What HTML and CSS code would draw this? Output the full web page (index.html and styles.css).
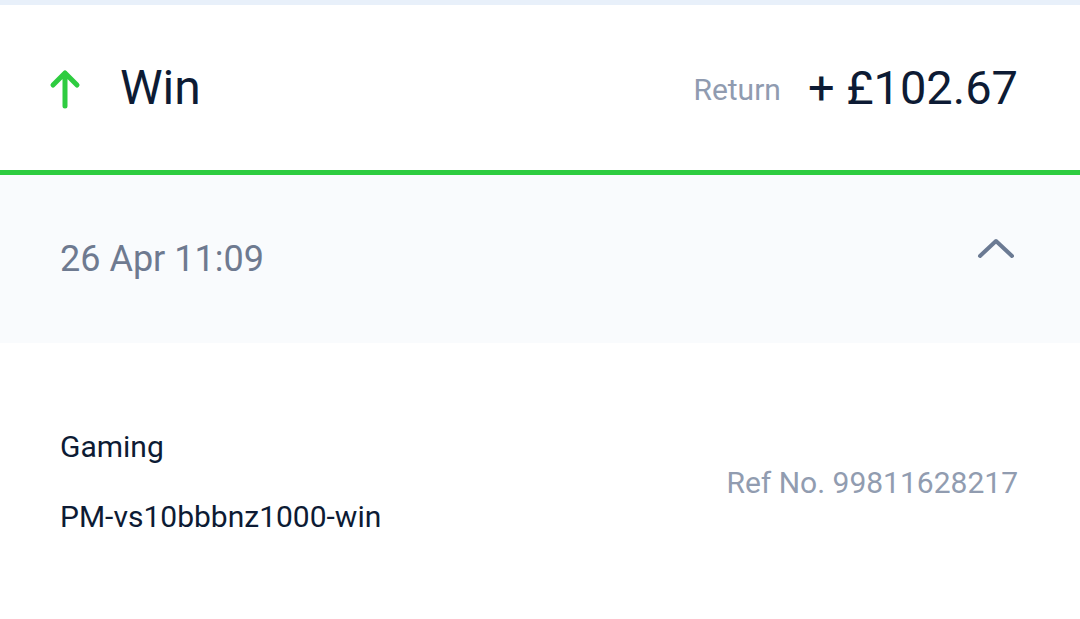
FILE: index.html
```html
<!DOCTYPE html>
<html lang="en">
<head>
  <meta charset="UTF-8">
  <meta name="viewport" content="width=device-width, initial-scale=1.0">
  <title>Transaction</title>
  <link rel="stylesheet" href="styles.css">
</head>
<body>
  <div class="top-strip"></div>

  <!-- En-tête de la transaction -->
  <header class="tx-header">
    <div class="tx-type">
      <svg class="arrow" width="32" height="40" viewBox="0 0 32 40">
        <path d="M16 37 V4 M4 16 L16 4 L28 16" fill="none" stroke="#2ecc40" stroke-width="5" stroke-linecap="round" stroke-linejoin="round"/>
      </svg>
      <span class="tx-title">Win</span>
    </div>
    <div class="tx-amount">
      <span class="label">Return</span>
      <span class="value">+ £102.67</span>
    </div>
  </header>

  <!-- Date et bouton replier -->
  <section class="tx-date">
    <span class="date">26 Apr 11:09</span>
    <svg class="chevron" width="38" height="22" viewBox="0 0 38 22">
      <path d="M3 19 L19 4 L35 19" fill="none" stroke="#6b7a93" stroke-width="4" stroke-linecap="round" stroke-linejoin="round"/>
    </svg>
  </section>

  <!-- Détails -->
  <section class="tx-details">
    <div class="info">
      <p>Gaming</p>
      <p>PM-vs10bbbnz1000-win</p>
    </div>
    <span class="ref">Ref No. 99811628217</span>
  </section>
</body>
</html>
```

FILE: styles.css
```css
/* Style général */
body {
  font-family: Roboto, "Noto Sans", Arial, sans-serif;
  margin: 0;
  padding: 0;
  background: #fff;
  color: #0d1b34;
}

.top-strip {
  height: 5px;
  background: #e8f0fa;
}

/* En-tête */
.tx-header {
  height: 165px;
  display: flex;
  align-items: center;
  justify-content: space-between;
  padding: 0 62px 0 49px;
  border-bottom: 5px solid #2ecc40;
}

.tx-type {
  display: flex;
  align-items: center;
  gap: 39px;
}

.arrow {
  display: block;
  margin-top: 2px;
}

.tx-title {
  font-size: 48px;
  line-height: 1;
}

.tx-amount {
  display: flex;
  align-items: center;
  gap: 27px;
}

.tx-amount .label {
  font-size: 30px;
  color: #909bb0;
  margin-top: 4px;
}

.tx-amount .value {
  font-size: 47px;
  line-height: 1;
}

/* Date */
.tx-date {
  height: 168px;
  background: #f9fbfd;
  display: flex;
  align-items: center;
  justify-content: space-between;
  padding: 0 65px 0 60px;
}

.date {
  font-size: 36px;
  color: #6e7a90;
}

.chevron {
  display: block;
  margin-top: -22px;
}

/* Détails */
.tx-details {
  display: flex;
  align-items: center;
  justify-content: space-between;
  padding: 69px 62px 0 60px;
}

.info p {
  margin: 0;
  font-size: 30px;
  line-height: 70px;
}

.ref {
  font-size: 30px;
  color: #919cb0;
}
```
